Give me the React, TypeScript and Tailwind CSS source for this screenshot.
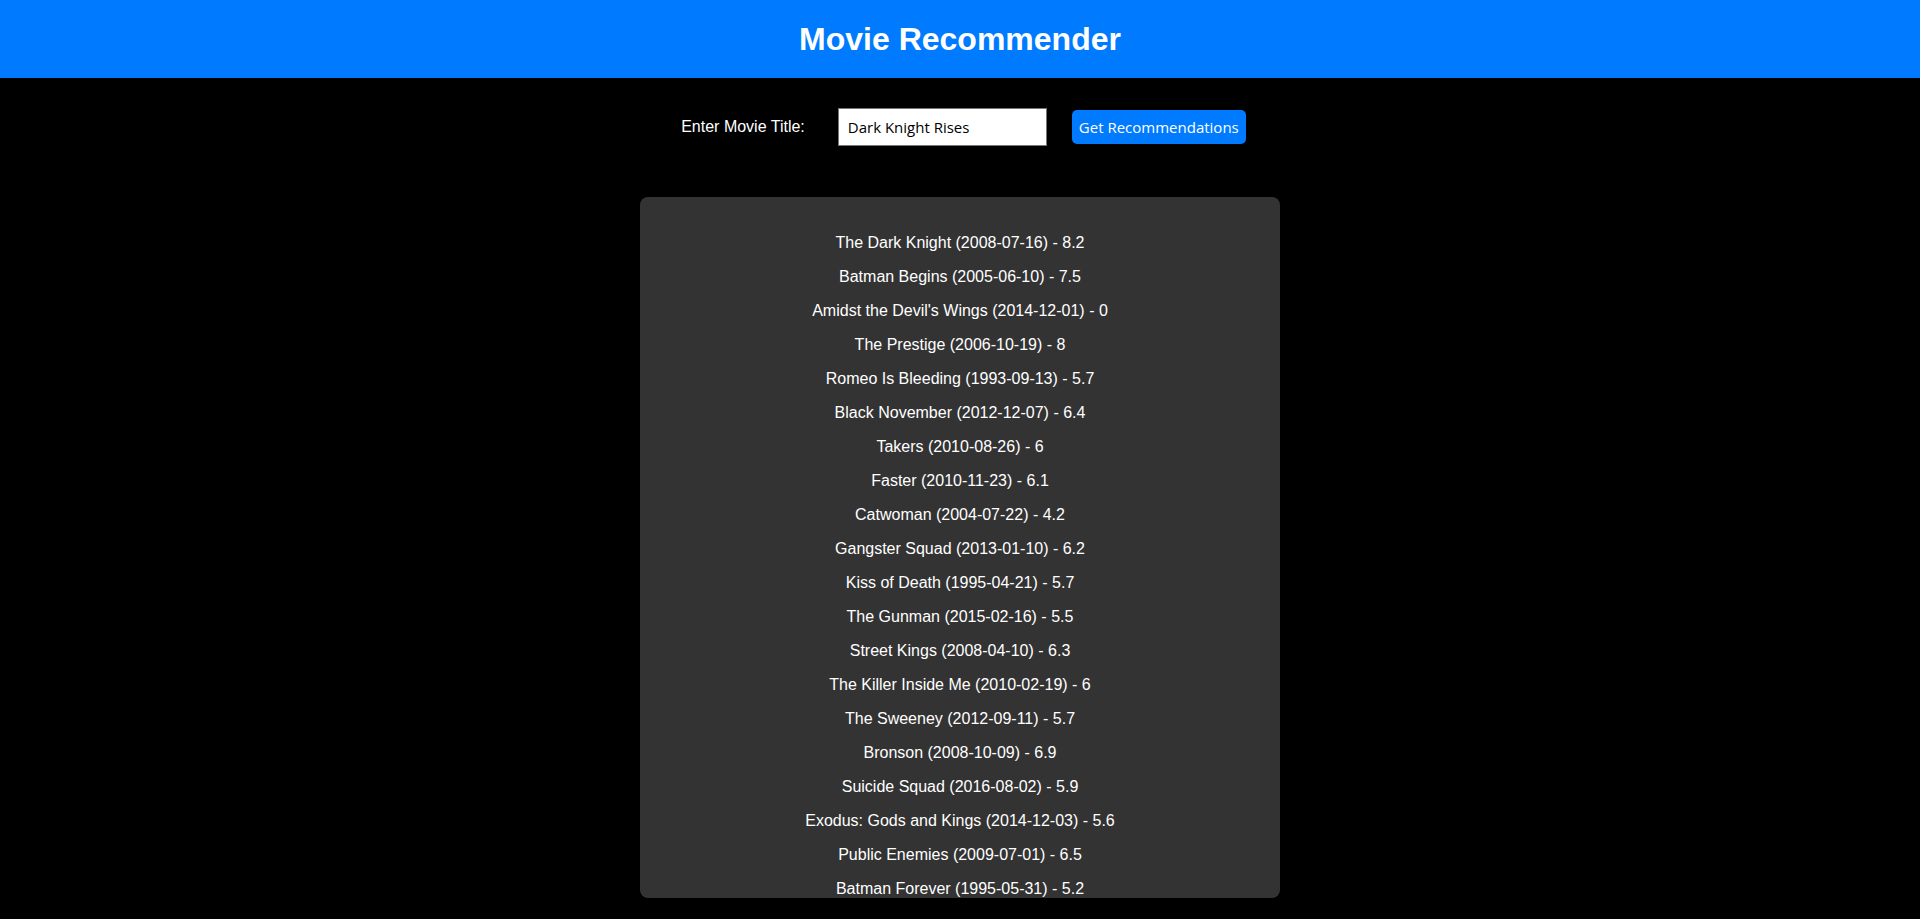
import React from "react";

const movies = [
  "The Dark Knight (2008-07-16) - 8.2",
  "Batman Begins (2005-06-10) - 7.5",
  "Amidst the Devil's Wings (2014-12-01) - 0",
  "The Prestige (2006-10-19) - 8",
  "Romeo Is Bleeding (1993-09-13) - 5.7",
  "Black November (2012-12-07) - 6.4",
  "Takers (2010-08-26) - 6",
  "Faster (2010-11-23) - 6.1",
  "Catwoman (2004-07-22) - 4.2",
  "Gangster Squad (2013-01-10) - 6.2",
  "Kiss of Death (1995-04-21) - 5.7",
  "The Gunman (2015-02-16) - 5.5",
  "Street Kings (2008-04-10) - 6.3",
  "The Killer Inside Me (2010-02-19) - 6",
  "The Sweeney (2012-09-11) - 5.7",
  "Bronson (2008-10-09) - 6.9",
  "Suicide Squad (2016-08-02) - 5.9",
  "Exodus: Gods and Kings (2014-12-03) - 5.6",
  "Public Enemies (2009-07-01) - 6.5",
  "Batman Forever (1995-05-31) - 5.2",
];

export default function App() {
  return (
    <div className="min-h-screen bg-black text-white font-['Liberation_Sans',Arial,sans-serif]">
      <header className="h-[78px] bg-[#007bff] flex items-center justify-center">
        <h1 className="text-[32px] font-bold leading-none">Movie Recommender</h1>
      </header>
      <div className="mt-[30px] h-[38px] flex items-center justify-center pl-[7px]">
        <label className="text-[16px] leading-[18px] mr-[33px]">Enter Movie Title:</label>
        <input
          type="text"
          defaultValue="Dark Knight Rises"
          className="w-[209px] h-[38px] bg-white text-black border border-[#767676] pl-[9px] text-[15px] font-['Open_Sans',sans-serif] outline-none"
        />
        <button className="ml-[25px] w-[174px] h-[34px] bg-[#007bff] text-white rounded-[5px] text-[15px] font-['Open_Sans',sans-serif] whitespace-nowrap">
          Get Recommendations
        </button>
      </div>
      <div className="mt-[51px] mx-auto w-[640px] h-[701px] overflow-hidden rounded-lg bg-[#333333] pt-[29px]">
        <ul className="text-center">
          {movies.map((m) => (
            <li key={m} className="py-[8px] text-[16px] leading-[18px]">
              {m}
            </li>
          ))}
        </ul>
      </div>
    </div>
  );
}
